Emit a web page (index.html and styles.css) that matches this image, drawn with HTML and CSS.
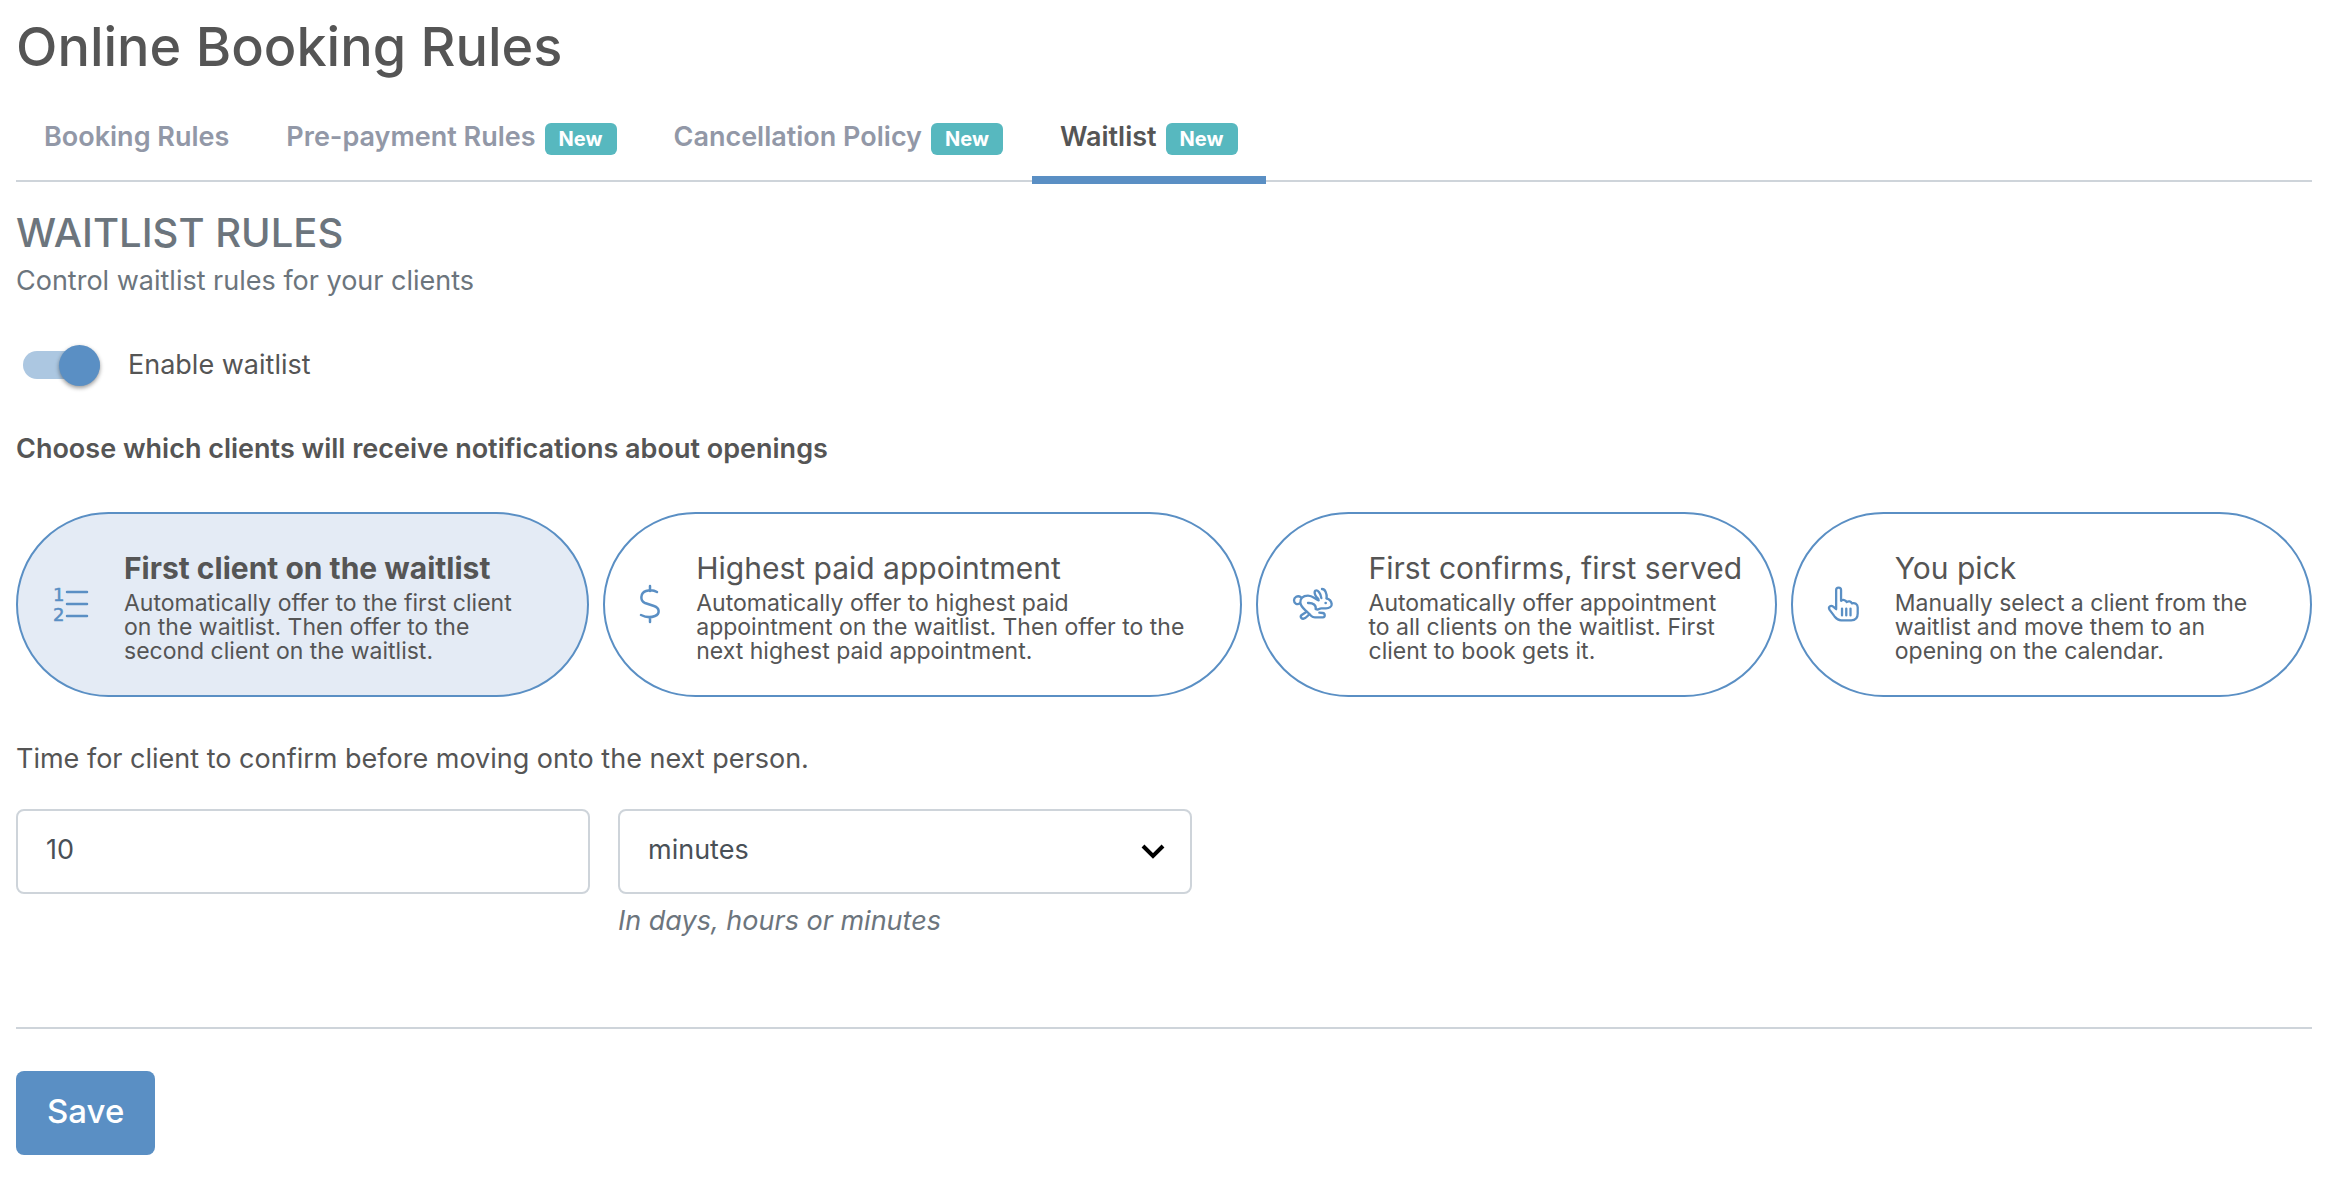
FILE: index.html
```
<!DOCTYPE html>
<html lang="en">
  <head>
    <meta charset="UTF-8" />
    <meta name="viewport" content="width=device-width, initial-scale=1.0" />
    <title>Online Booking Rules</title>
    <link rel="stylesheet" href="styles.css">
  </head>
  <body>
    <main class="page">
      <h1 class="page-title">Online Booking Rules</h1>

      <nav class="tabs">
        <a class="tab" href="#booking">Booking Rules</a>
        <a class="tab" href="#prepayment">Pre-payment Rules <span class="badge">New</span></a>
        <a class="tab" href="#cancellation">Cancellation Policy <span class="badge">New</span></a>
        <a class="tab active" href="#waitlist" aria-current="page">Waitlist <span class="badge">New</span></a>
      </nav>

      <form class="waitlist-form">
        <h2 class="section-title">WAITLIST RULES</h2>
        <p class="section-text">Control waitlist rules for your clients</p>

        <div class="switch-row">
          <input class="switch" type="checkbox" role="switch" id="enable-waitlist" checked />
          <label for="enable-waitlist">Enable waitlist</label>
        </div>

        <fieldset class="options">
          <legend class="options-label">Choose which clients will receive notifications about openings</legend>
          <div class="option-list">
            <label class="option">
              <input class="option-input" type="radio" name="mode" value="first" checked />
              <svg class="icon" width="35" height="36" viewBox="0 0 35 36" aria-hidden="true">
                <text class="icon-digit" x="0" y="15">1</text>
                <text class="icon-digit" x="0" y="35">2</text>
                <path d="M14 6h20M14 18h20M14 30h20" />
              </svg>
              <span class="option-body">
                <span class="option-title">First client on the waitlist</span>
                <span class="option-text">Automatically offer to the first client on the waitlist. Then offer to the second client on the waitlist.</span>
              </span>
            </label>

            <label class="option">
              <input class="option-input" type="radio" name="mode" value="highest" />
              <svg class="icon" width="20" height="36" viewBox="0 0 20 36" aria-hidden="true">
                <path d="M10 0v5M10 31v5M17 6C14 4 9 4 6 5C0 7 0 15 5 17L14 20C20 22 20 28 15 30C10 32 5 31 1 29" />
              </svg>
              <span class="option-body">
                <span class="option-title">Highest paid appointment</span>
                <span class="option-text">Automatically offer to highest paid appointment on the waitlist. Then offer to the next highest paid appointment.</span>
              </span>
            </label>

            <label class="option">
              <input class="option-input" type="radio" name="mode" value="confirm" />
              <svg class="icon icon-large" width="40" height="32" viewBox="37 53 120 96" aria-hidden="true">
                <path d="M60 80C51 74 40 81 40 90C40 99 49 105 58 99" />
                <path d="M82 98C98 97 107 105 105 116M114 90C101 85 96 76 82 76C66 76 58 85 59 97C60 110 71 116 80 125L92 137C95 140 98 141 103 141H127C134 141 134 129 126 128L116 127M105 116C114 121 114 114 122 114H136C146 114 154 109 153 101C152 93 146 86 138 84" />
                <path d="M113 86C104 79 99 66 104 61C111 57 121 71 122 83M124 56C133 56 139 68 138 84" />
                <path d="M78 124L63 134C57 139 62 147 69 145C77 143 81 136 86 132" />
                <circle class="icon-dot" cx="135" cy="98" r="4" />
              </svg>
              <span class="option-body">
                <span class="option-title">First confirms, first served</span>
                <span class="option-text">Automatically offer appointment to all clients on the waitlist. First client to book gets it.</span>
              </span>
            </label>

            <label class="option">
              <input class="option-input" type="radio" name="mode" value="manual" />
              <svg class="icon icon-large" width="31" height="36" viewBox="53 46 95 108" aria-hidden="true">
                <path d="M78 116V57C78 47 93 47 93 57V90C98 86 108 87 110 94C116 90 124 92 126 98C135 95 144 100 144 110V129C144 143 136 150 124 150H93C84 150 79 145 73 138L58 118C52 108 62 103 69 108L78 116" />
                <path d="M96 114V135M109 114V135M122 114V135" />
              </svg>
              <span class="option-body">
                <span class="option-title">You pick</span>
                <span class="option-text">Manually select a client from the waitlist and move them to an opening on the calendar.</span>
              </span>
            </label>
          </div>
        </fieldset>

        <label class="time-label" for="time-value">Time for client to confirm before moving onto the next person.</label>
        <div class="time-row">
          <div class="time-col">
            <input class="control" type="text" id="time-value" value="10" />
          </div>
          <div class="time-col">
            <div class="select-wrap">
              <select class="control" aria-label="Time unit" aria-describedby="unit-hint">
                <option>days</option>
                <option>hours</option>
                <option selected>minutes</option>
              </select>
              <svg class="chevron" width="26" height="17" viewBox="0 0 26 17" aria-hidden="true">
                <path d="M3 3l10 10L23 3" />
              </svg>
            </div>
            <p class="hint" id="unit-hint">In days, hours or minutes</p>
          </div>
        </div>

        <hr class="divider" />
        <button class="save" type="submit">Save</button>
      </form>
    </main>
  </body>
</html>
```
FILE: styles.css
```
* {
  box-sizing: border-box;
}
body {
  margin: 0;
  background: #fff;
  color: #555;
  font-family: Inter, "Open Sans", sans-serif;
  font-size: 27px;
  line-height: 40px;
}
.page {
  padding: 15px 26px 20px 16px;
}
.page-title {
  margin: 0 0 20px;
  font-size: 54px;
  font-weight: 500;
  line-height: 64px;
}

/* tabs */
.tabs {
  display: flex;
  gap: 1px;
  border-bottom: 2px solid #ced4da;
}
.tab {
  display: flex;
  align-items: baseline;
  gap: 9px;
  margin-bottom: -4px;
  padding: 20px 28px 21px;
  border-bottom: 8px solid transparent;
  color: #9298a7;
  font-weight: 600;
  line-height: 36px;
  text-decoration: none;
}
.tab.active {
  border-color: #5a8fc4;
  color: #555;
}
.badge {
  padding: 0 14px;
  border-radius: 6px;
  background: #57b8bf;
  color: #fff;
  font-size: 20px;
  font-weight: 700;
  line-height: 32px;
}

.section-title {
  margin: 27px 0 4px;
  color: #6c757d;
  font-size: 40px;
  font-weight: 500;
  line-height: 48px;
}
.section-text {
  margin: 0;
  color: #6c757d;
}

/* switch */
.switch-row {
  display: flex;
  align-items: center;
  gap: 28px;
  margin: 44px 0;
  padding-left: 7px;
}
.switch {
  appearance: none;
  position: relative;
  width: 77px;
  height: 28px;
  margin: 0;
  border-radius: 14px;
  background: #ccc;
}
.switch::before {
  content: "";
  position: absolute;
  top: -6px;
  left: 0;
  width: 41px;
  height: 41px;
  border-radius: 50%;
  background: #fafafa;
  box-shadow: 0 2px 4px rgba(0, 0, 0, 0.4);
}
.switch:checked {
  background: #acc7e1;
}
.switch:checked::before {
  left: auto;
  right: 0;
  background: #5a8fc4;
}

/* options */
.options {
  min-width: 0;
  margin: 0;
  padding: 0;
  border: 0;
}
.options-label {
  padding: 0;
  font-weight: 600;
}
.option-list {
  display: grid;
  grid-template-columns: minmax(0, 573fr) minmax(0, 638fr) minmax(0, 521fr) minmax(0, 521fr);
  gap: 14px;
  margin-top: 43px;
}
.option {
  display: flex;
  align-items: center;
  gap: 36px;
  padding: 36px 43px 32px 35px;
  border: 2px solid #5a8fc4;
  border-radius: 93px;
  cursor: pointer;
}
.option:has(:checked) {
  background: #e4ebf5;
}
.option:has(:checked) .option-title {
  font-weight: 700;
}
.option-input {
  appearance: none;
  position: absolute;
  margin: 0;
}
.option-body {
  min-width: 0;
}
.option-title,
.option-text {
  display: block;
}
.option-title {
  margin-bottom: 5px;
  font-size: 30px;
  line-height: 36px;
  white-space: nowrap;
}
.option-text {
  font-size: 23px;
  line-height: 24px;
}
.icon {
  flex: none;
  margin-bottom: 6px;
  overflow: visible;
  fill: none;
  stroke: #5a8fc4;
  stroke-width: 2.5;
  stroke-linecap: round;
  stroke-linejoin: round;
}
.icon-large {
  stroke-width: 7;
}
.icon-digit {
  fill: #5a8fc4;
  stroke-width: 0.5;
  font-family: "DejaVu Sans", sans-serif;
  font-size: 18px;
}
.icon-dot {
  fill: #5a8fc4;
  stroke: none;
}

/* time to confirm */
.time-label {
  display: block;
  margin: 42px 0 30px;
}
.time-row {
  display: flex;
  gap: 28px;
}
.time-col {
  width: 25%;
}
.control {
  appearance: none;
  display: block;
  width: 100%;
  height: 85px;
  padding: 0 28px 4px;
  border: 2px solid #ced4da;
  border-radius: 8px;
  background: #fff;
  color: #495057;
  font: inherit;
}
.select-wrap {
  position: relative;
}
.chevron {
  position: absolute;
  top: 34px;
  right: 26px;
  fill: none;
  stroke: #000;
  stroke-width: 4;
  pointer-events: none;
}
.hint {
  margin: 7px 0 0;
  color: #6c757d;
  font-style: italic;
}

.divider {
  height: 2px;
  margin: 86px 0 42px;
  border: 0;
  background: #ced4da;
}
.save {
  height: 84px;
  padding: 0 31px 4px;
  border: 0;
  border-radius: 8px;
  background: #5a8fc4;
  color: #fff;
  font-family: inherit;
  font-size: 33px;
  font-weight: 500;
}
```
